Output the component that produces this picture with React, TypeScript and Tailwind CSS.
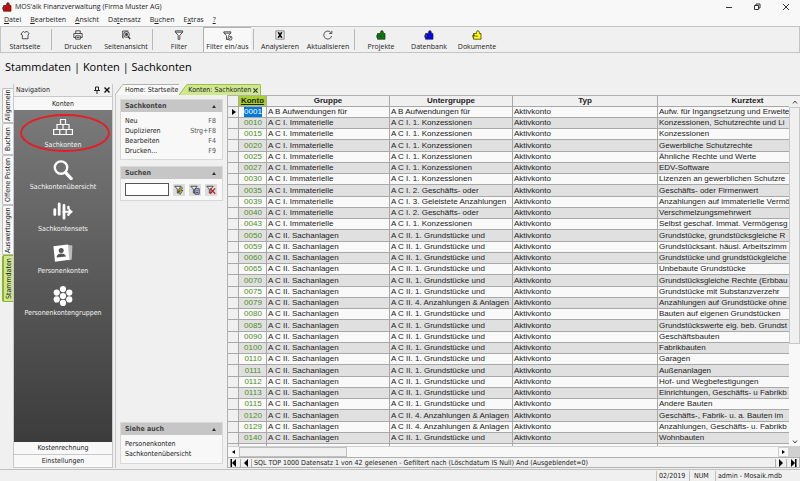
import React from 'react';
import clsx from 'clsx';

type Account = [konto: string, gruppe: string, untergruppe: string, kurztext: string];

const IM = 'A C I. Immaterielle';
const SA = 'A C II. Sachanlagen';
const K1 = 'A C I. 1. Konzessionen';
const K2 = 'A C I. 2. Geschäfts- oder';
const G1 = 'A C II. 1. Grundstücke und';
const G4 = 'A C II. 4. Anzahlungen & Anlagen';

const accounts: Account[] = [
  ['0001', 'A B Aufwendungen für', 'A B Aufwendungen für', 'Aufw. für Ingangsetzung und Erweite'],
  ['0010', IM, K1, 'Konzessionen, Schutzrechte und Li'],
  ['0015', IM, K1, 'Konzessionen'],
  ['0020', IM, K1, 'Gewerbliche Schutzrechte'],
  ['0025', IM, K1, 'Ähnliche Rechte und Werte'],
  ['0027', IM, K1, 'EDV-Software'],
  ['0030', IM, K1, 'Lizenzen an gewerblichen Schutzre'],
  ['0035', IM, K2, 'Geschäfts- oder Firmenwert'],
  ['0039', IM, 'A C I. 3. Geleistete Anzahlungen', 'Anzahlungen auf immaterielle Vermö'],
  ['0040', IM, K2, 'Verschmelzungsmehrwert'],
  ['0043', IM, K1, 'Selbst geschaf. Immat. Vermögensg'],
  ['0050', SA, G1, 'Grundstücke, grundstücksgleiche R'],
  ['0059', SA, G1, 'Grundstücksant. häusl. Arbeitszimm'],
  ['0060', SA, G1, 'Grundstücke und grundstückgleiche'],
  ['0065', SA, G1, 'Unbebaute Grundstücke'],
  ['0070', SA, G1, 'Grundstücksgleiche Rechte (Erbbau'],
  ['0075', SA, G1, 'Grundstücke mit Substanzverzehr'],
  ['0079', SA, G4, 'Anzahlungen auf Grundstücke ohne'],
  ['0080', SA, G1, 'Bauten auf eigenen Grundstücken'],
  ['0085', SA, G1, 'Grundstückswerte eig. beb. Grundst'],
  ['0090', SA, G1, 'Geschäftsbauten'],
  ['0100', SA, G1, 'Fabrikbauten'],
  ['0110', SA, G1, 'Garagen'],
  ['0111', SA, G1, 'Außenanlagen'],
  ['0112', SA, G1, 'Hof- und Wegbefestigungen'],
  ['0113', SA, G1, 'Einrichtungen, Geschäfts- u Fabrikb'],
  ['0115', SA, G1, 'Andere Bauten'],
  ['0120', SA, G4, 'Geschäfts-, Fabrik- u. a. Bauten im'],
  ['0129', SA, G4, 'Anzahlungen, Geschäfts- u. Fabrikb'],
  ['0140', SA, G1, 'Wohnbauten'],
  ['0145', SA, G1, 'Garagen'],
];

const menu: [string, string, string][] = [
  ['', 'D', 'atei'],
  ['', 'B', 'earbeiten'],
  ['', 'A', 'nsicht'],
  ['Da', 't', 'ensatz'],
  ['B', 'u', 'chen'],
  ['E', 'x', 'tras'],
  ['', '?', ''],
];

/* ---------- icons ---------- */

const Puzzle = ({ color, className }: { color: string; className?: string }) => (
  <svg viewBox="0 0 10 10" className={clsx('size-2.5', className)}>
    <path
      d="M4.5 3.5V2.2L5.2 .8h1.4l.8 1.4v1.3H9v5.7H1.5V7.4H.8V5.2h.7v1h1.2V4.9H1.5V3.5z"
      fill={color}
      stroke="#222"
      strokeWidth=".7"
    />
    <path d="M3.4 6.2h2.4" stroke="#222" strokeWidth=".7" />
  </svg>
);

const Line = ({ children }: { children: React.ReactNode }) => (
  <svg viewBox="0 0 12 12" className="size-2.5" fill="none" stroke="#333" strokeWidth="1">
    {children}
  </svg>
);

const StartIcon = () => (
  <Line>
    <path d="M1 5L4 1.6l1.4 1.2L8.6 1.6 11 4.6 9.6 5.8v4.7H2.8V6z" strokeLinejoin="round" />
  </Line>
);

const PrintIcon = () => (
  <Line>
    <path d="M3.3 4V1h5.4v3M3 9H1V4.2h10V9H9M3.2 7h5.6v4H3.2zM4.4 9h3.2" />
  </Line>
);

const PreviewIcon = () => (
  <Line>
    <path d="M2 8V1.2h7M3.5 9.5H2V7" />
    <circle cx="6.6" cy="5.4" r="3.4" />
    <circle cx="6.6" cy="5.4" r="1.4" fill="#333" />
    <path d="M8.6 7.8l2.4 3" strokeWidth="1.6" />
  </Line>
);

const FilterIcon = () => (
  <Line>
    <path d="M1.6 1h8.8v1.6L7 6.4v4.8H5V6.4L1.6 2.6zM1.8 2.6h8.4" />
  </Line>
);

const FilterToggleIcon = () => (
  <Line>
    <path d="M1 1h8.4v1.4L6.4 5.6M1 1v1.4l3.2 3.2v4.6h2M1.2 2.6h8" />
    <circle cx="8.4" cy="8.6" r="2.4" />
    <path d="M7 10l3-3" />
  </Line>
);

const ExcelIcon = () => (
  <Line>
    <path d="M1 1h10v10H1z" stroke="#777" />
    <path d="M3.8 2.8l4.4 6.4M8.2 2.8L3.8 9.2" stroke="#111" strokeWidth="2" />
  </Line>
);

const RefreshIcon = () => (
  <Line>
    <path d="M10.4 7.2A4.8 4.8 0 1 1 9.6 3.2M10.6 1v3.2H7.4" />
  </Line>
);

const BricksIcon = () => (
  <svg viewBox="0 0 20 18" className="h-[18px] w-5" fill="none" stroke="#fff" strokeWidth="1.2">
    <path d="M7.5 1.5h5v5h-5zM4 6.5h6v5H4zM10 6.5h6v5h-6zM.6 11.5h6.2v5H.6zM6.8 11.5h6.4v5H6.8zM13.2 11.5h6.2v5h-6.2z" />
  </svg>
);

const SearchIcon = () => (
  <svg viewBox="0 0 20 20" className="size-5" fill="none" stroke="#fff">
    <circle cx="8" cy="7.6" r="6.2" strokeWidth="2.4" />
    <path d="M12.6 12.6l5.6 6" strokeWidth="3.2" strokeLinecap="round" />
  </svg>
);

const SetsIcon = () => (
  <svg viewBox="0 0 20 18" className="h-[18px] w-5" fill="none" stroke="#fff" strokeWidth="2.8" strokeLinecap="round">
    <path d="M1.8 7.6v5M6.2 2v10.4M11 3.4v12.8" />
    <path d="M15.4 5v1.4M15.4 12.4v.4" strokeWidth="2.4" />
    <path d="M10.4 9.8h6" strokeWidth="2" />
    <path d="M15.6 6l4.4 3.8-4.4 3.8z" fill="#fff" stroke="none" />
  </svg>
);

const PersonIcon = () => (
  <svg viewBox="0 0 20 18" className="h-[18px] w-5">
    <path d="M14.6 .8l4.8 .6-.6 14-3 1z" fill="#bbb" />
    <path d="M.4 2.2L15 .4l1.4 15.4L2 17.8z" fill="#fff" />
    <circle cx="8.2" cy="6.6" r="2.5" fill="#555" />
    <path d="M3.6 13.4c.4-3 2.2-4 4.6-4s4 .8 4.8 3.2z" fill="#555" />
  </svg>
);

const GroupIcon = () => (
  <svg viewBox="0 0 20 20" className="size-5" fill="#fff">
    <circle cx="10" cy="10" r="3.1" />
    <circle cx="10" cy="3.1" r="3.1" />
    <circle cx="10" cy="16.9" r="3.1" />
    <circle cx="3.7" cy="6.6" r="3.1" />
    <circle cx="16.3" cy="6.6" r="3.1" />
    <circle cx="3.7" cy="13.4" r="3.1" />
    <circle cx="16.3" cy="13.4" r="3.1" />
  </svg>
);

const SmallFilter = ({ children }: { children: React.ReactNode }) => (
  <svg viewBox="0 0 12 12" className="size-2.5" fill="none">
    <path d="M1 1.5h7.6L5.8 5v4.6H4V5z" stroke="#333" fill="#eee" />
    {children}
  </svg>
);

const Arrow = ({ dir, bar }: { dir: 'left' | 'right'; bar?: boolean }) => (
  <svg viewBox="0 0 8 8" className={clsx('size-2', dir === 'left' && 'rotate-180')}>
    <path d="M2 0l4 4-4 4z" fill="#000" />
    {bar && <path d="M6 0h1.5v8H6z" fill="#000" />}
  </svg>
);

/* ---------- parts ---------- */

const ToolButton = ({ icon, label, active }: { icon: React.ReactNode; label: string; active?: boolean }) => (
  <button
    className={clsx(
      'flex w-12 shrink-0 flex-col items-center justify-between whitespace-nowrap pt-[3px] text-[7px] leading-[10px]',
      active && 'border-t border-l border-[#b0b0b0] bg-[#f8f8f8]'
    )}
  >
    {icon}
    <span>{label}</span>
  </button>
);

const Separator = () => <div className="mx-0.5 my-0.5 w-px shrink-0 bg-[#b8b8b8]" />;

const Panel = ({ title, children }: { title: string; children: React.ReactNode }) => (
  <section className="border border-[#d8d8d8] bg-[#f8f8f8]">
    <h2 className="flex h-3 items-center justify-between bg-[#c6c6c6] px-1 font-bold text-[#444]">
      {title}
      <svg viewBox="0 0 4 3" className="mr-0.5 h-[3px] w-1">
        <path d="M0 3l2-3 2 3z" fill="#333" />
      </svg>
    </h2>
    {children}
  </section>
);

const commands = [
  ['Neu', 'F8'],
  ['Duplizieren', 'Strg+F8'],
  ['Bearbeiten', 'F4'],
  ['Drucken...', 'F9'],
];

const navItems = [
  { label: 'Sachkonten', icon: <BricksIcon />, marked: true },
  { label: 'Sachkontenübersicht', icon: <SearchIcon /> },
  { label: 'Sachkontensets', icon: <SetsIcon /> },
  { label: 'Personenkonten', icon: <PersonIcon /> },
  { label: 'Personenkontengruppen', icon: <GroupIcon /> },
];

const sideTabs = [
  { label: 'Allgemein', size: 'h-[35px]' },
  { label: 'Buchen', size: 'h-8' },
  { label: 'Offene Posten', size: 'h-[50px]' },
  { label: 'Auswertungen', size: 'h-[50px]' },
  { label: 'Stammdaten', size: 'h-[47px]', active: true },
];

const TitleBar = () => (
  <header className="flex h-[14px] shrink-0 items-center bg-[#f8f8f8] pl-0.5 text-[7px]">
    <Puzzle color="#e00000" className="mr-[3px]" />
    <h1>MOS'aik Finanzverwaltung (Firma Muster AG)</h1>
    <div className="ml-auto flex">
      <button aria-label="Minimieren" className="flex w-[29px] justify-center">
        <svg viewBox="0 0 8 8" className="size-2" stroke="#333">
          <path d="M1 4.5h6" />
        </svg>
      </button>
      <button aria-label="Wiederherstellen" className="flex w-[28px] justify-center">
        <svg viewBox="0 0 8 8" className="size-2" fill="none" stroke="#333">
          <path d="M1.5 2.5h4v4h-4zM3 2V1h4v4H6" />
        </svg>
      </button>
      <button aria-label="Schließen" className="flex w-[29px] justify-center">
        <svg viewBox="0 0 8 8" className="size-2" stroke="#333">
          <path d="M1 1l6 6M7 1L1 7" />
        </svg>
      </button>
    </div>
  </header>
);

const Toolbar = () => (
  <div className="flex h-[27px] shrink-0 border border-[#c4c4c4] bg-[#f0f0f0]">
    <ToolButton icon={<StartIcon />} label="Startseite" />
    <Separator />
    <ToolButton icon={<PrintIcon />} label="Drucken" />
    <ToolButton icon={<PreviewIcon />} label="Seitenansicht" />
    <Separator />
    <ToolButton icon={<FilterIcon />} label="Filter" />
    <ToolButton icon={<FilterToggleIcon />} label="Filter ein/aus" active />
    <Separator />
    <ToolButton icon={<ExcelIcon />} label="Analysieren" />
    <ToolButton icon={<RefreshIcon />} label="Aktualisieren" />
    <Separator />
    <ToolButton icon={<Puzzle color="#008000" />} label="Projekte" />
    <ToolButton icon={<Puzzle color="#0000ff" />} label="Datenbank" />
    <ToolButton icon={<Puzzle color="#ffff00" />} label="Dokumente" />
  </div>
);

const Navigation = () => (
  <nav className="flex w-[100px] shrink-0 flex-col border-x border-b border-[#c8c8c8] bg-[#f8f8f8] text-[7px] leading-[10px]">
    <div className="flex h-3 items-center bg-[#f0f0f0] px-0.5">
      Navigation
      <svg viewBox="0 0 6 8" className="ml-auto h-2 w-1.5" fill="none" stroke="#222">
        <path d="M1.5 1h3v3.5h-3zM0 4.5h6M3 4.5V8" />
      </svg>
      <svg viewBox="0 0 6 6" className="ml-1 size-1.5" stroke="#111" strokeWidth="1.4">
        <path d="M.5 .5l5 5M5.5 .5l-5 5" />
      </svg>
    </div>
    <button className="h-[14px] border-t border-[#c8c8c8]">Konten</button>
    <div className="flex min-h-0 flex-1 flex-col items-center gap-2.5 bg-linear-to-b from-[#7a7a7a] to-[#3c3c3c] pt-2 text-[#f4f4f4]">
      {navItems.map(item => (
        <a key={item.label} href="#" className="relative flex h-8 flex-col items-center justify-between">
          {item.icon}
          {item.label}
          {item.marked && (
            <span className="absolute -top-1 left-1/2 ml-0.5 h-[38px] w-[90px] -translate-x-1/2 rounded-[50%] border-2 border-[#e81c24]" />
          )}
        </a>
      ))}
    </div>
    <button className="h-3">Kostenrechnung</button>
    <button className="h-[13px] border-t border-[#c8c8c8]">Einstellungen</button>
  </nav>
);

const TaskPane = () => (
  <aside className="flex w-28 shrink-0 flex-col gap-1.5 border-l border-[#c8c8c8] px-1 pt-1 pb-1 text-[7px] leading-[10px]">
    <Panel title="Sachkonten">
      <ul className="px-1 pt-1 pb-[3px]">
        {commands.map(([name, key]) => (
          <li key={name}>
            <button className="flex w-full justify-between pr-0.5">
              <span>{name}</span>
              <span className="text-[#555]">{key}</span>
            </button>
          </li>
        ))}
      </ul>
    </Panel>
    <Panel title="Suchen">
      <div className="flex items-center gap-1 px-1 py-1">
        <input aria-label="Suchen" className="h-[13px] w-11 border border-[#555] bg-white px-0.5" />
        <button aria-label="Filtern" className="flex size-3 items-center justify-center bg-[#dcdcdc]">
          <SmallFilter>
            <path d="M10 3L6.8 7.4h2.4L6.6 11" stroke="#333" strokeWidth="2" />
            <path d="M10 3L6.8 7.4h2.4L6.6 11" stroke="#e8e800" />
          </SmallFilter>
        </button>
        <button aria-label="Filter bearbeiten" className="flex size-3 items-center justify-center bg-[#dcdcdc]">
          <SmallFilter>
            <path d="M6 4.5h5v6.5H6zM7.4 7h2.4M7.4 9h2.4" stroke="#224" fill="#cde" />
          </SmallFilter>
        </button>
        <button aria-label="Filter löschen" className="flex size-3 items-center justify-center bg-[#dcdcdc]">
          <SmallFilter>
            <path d="M5 4l6 6.5M11 4l-6 6.5" stroke="#c02020" strokeWidth="1.5" />
          </SmallFilter>
        </button>
      </div>
    </Panel>
    <div className="mt-auto">
      <Panel title="Siehe auch">
        <ul className="px-1 pt-1 pb-1">
          <li><a href="#">Personenkonten</a></li>
          <li><a href="#">Sachkontenübersicht</a></li>
        </ul>
      </Panel>
    </div>
  </aside>
);

const AccountGrid = () => (
  <div className="flex min-h-0 flex-1">
    <div className="min-w-0 flex-1 overflow-hidden">
      <table className="w-full table-fixed border-separate border-spacing-0 font-['Liberation_Sans',Arial,sans-serif] text-[8px] leading-[10px] whitespace-nowrap [&_td]:overflow-hidden [&_td]:border-r [&_td]:border-b [&_td]:border-[#a8a8a8] [&_td]:p-0 [&_td]:pl-px [&_td:last-child]:border-r-0 [&_th]:border-r [&_th]:border-b [&_th]:border-[#a8a8a8] [&_th]:p-0 [&_th:last-child]:border-r-0">
        <colgroup>
          <col className="w-[11px]" />
          <col className="w-7" />
          <col className="w-[123px]" />
          <col className="w-[123px]" />
          <col className="w-[145px]" />
          <col />
        </colgroup>
        <thead>
          <tr className="h-[11px] bg-[#f0f0f0]">
            <th />
            <th className="bg-[#a8d030] underline">Konto</th>
            <th>Gruppe</th>
            <th>Untergruppe</th>
            <th>Typ</th>
            <th>
              <span className="block pl-12">Kurztext</span>
            </th>
          </tr>
        </thead>
        <tbody>
          {accounts.map(([konto, gruppe, untergruppe, kurztext], i) => (
            <tr key={konto} className="h-[11px] odd:bg-[#f9f9f9] even:bg-[#e0e0e0] nth-[4n]:h-3">
              <td className="bg-[#f0f0f0]">
                {i === 0 && (
                  <svg viewBox="0 0 4 6" className="mx-auto h-1.5 w-1">
                    <path d="M0 0l4 3-4 3z" fill="#000" />
                  </svg>
                )}
              </td>
              <td className="text-center text-[#4f8f1f]">
                <span className={clsx(i === 0 && 'mx-auto block w-[18px] bg-[#0078d7] text-white')}>{konto}</span>
              </td>
              <td>{gruppe}</td>
              <td>{untergruppe}</td>
              <td>Aktivkonto</td>
              <td>{kurztext}</td>
            </tr>
          ))}
        </tbody>
      </table>
    </div>
    <div className="flex w-[11px] shrink-0 flex-col items-center bg-[#f8f8f8]">
      <button aria-label="Nach oben" className="flex h-[11px] w-full items-center justify-center bg-[#f0f0f0]">
        <svg viewBox="0 0 6 4" className="h-1 w-1.5" fill="none" stroke="#444">
          <path d="M1 3.5l2-2.5 2 2.5" />
        </svg>
      </button>
      <div className="min-h-0 w-full flex-5 border border-[#c8c8c8] bg-[#f0f0f0]" />
      <div className="min-h-0 w-full flex-2" />
      <button aria-label="Nach unten" className="flex h-2 w-full items-center justify-center">
        <svg viewBox="0 0 6 4" className="h-1 w-1.5" fill="none" stroke="#444">
          <path d="M1 .5L3 3 5 .5" />
        </svg>
      </button>
    </div>
  </div>
);

const App: React.FC = () => (
  <div className="flex h-screen flex-col overflow-hidden bg-[#f0f0f0] font-['Open_Sans','Segoe_UI',sans-serif] text-[#222]">
    <TitleBar />
    <div className="flex h-3 shrink-0 items-center gap-[9px] bg-[#f8f8f8] pl-1 text-[7px]">
      {menu.map(([before, key, after]) => (
        <button key={before + key + after}>
          {before}
          <u>{key}</u>
          {after}
        </button>
      ))}
    </div>
    <Toolbar />
    <h2 className="shrink-0 px-[5px] pt-1 pb-[7px] text-[11px] leading-5 text-black">Stammdaten | Konten | Sachkonten</h2>

    <main className="flex min-h-0 flex-1 font-['DejaVu_Sans_Condensed','DejaVu_Sans',sans-serif]">
      <div className="flex shrink-0 flex-col pt-1 pl-0.5 text-[7px] leading-[10px]">
        {sideTabs.map(tab => (
          <button
            key={tab.label}
            className={clsx(
              'flex w-[11px] rotate-180 items-center justify-center rounded-r-xs border border-l-0 whitespace-nowrap [writing-mode:vertical-rl]',
              tab.size,
              tab.active ? 'border-r-2 border-[#8ab820] bg-[#cfe890]' : 'border-[#c0c0c0] bg-[#f8f8f8]'
            )}
          >
            {tab.label}
          </button>
        ))}
      </div>
      <Navigation />

      <div className="ml-0.5 flex min-w-0 flex-1 flex-col">
        <div className="flex h-[11px] shrink-0 items-stretch text-[7px] leading-[10px] whitespace-nowrap">
          <button className="flex items-center">
            <svg viewBox="0 0 9 11" className="h-[11px] w-[9px]">
              <path d="M0 11L7 1.5Q8 .5 9 .5V11z" fill="#f8f8f8" />
              <path d="M0 11L7 1.5Q8 .5 9 .5" fill="none" stroke="#b0b0b0" />
            </svg>
            <span className="h-full border-t border-[#b0b0b0] bg-[#f8f8f8] px-px">Home: Startseite</span>
          </button>
          <button className="flex items-center">
            <svg viewBox="0 0 9 11" className="h-[11px] w-[9px]">
              <path d="M0 11L7 1.5Q8 .5 9 .5V11z" fill="#cfe890" />
              <path d="M0 11L7 1.5Q8 .5 9 .5" fill="none" stroke="#9cc040" />
            </svg>
            <span className="flex h-full items-center gap-0.5 rounded-tr-xs border-t border-r border-[#9cc040] bg-[#cfe890] pr-0.5">
              Konten: Sachkonten
              <svg viewBox="0 0 6 6" className="size-[5px]" stroke="#333" strokeWidth="1.4">
                <path d="M.5 .5l5 5M5.5 .5l-5 5" />
              </svg>
            </span>
          </button>
        </div>
        <div className="flex min-h-0 flex-1">
          <TaskPane />
          <div className="flex min-w-0 flex-1 flex-col border-t border-l border-[#b0b0b0]">
            <AccountGrid />
            <div className="flex h-[11px] shrink-0 border-t border-[#d0d0d0] bg-[#f8f8f8]">
              <button aria-label="Nach links" className="flex w-[11px] items-center justify-center">
                <svg viewBox="0 0 3 4" className="h-1 w-[3px]"><path d="M3 0L0 2l3 2z" /></svg>
              </button>
              <div className="w-[108px] border border-[#c0c0c0] bg-[#f0f0f0]" />
              <button aria-label="Nach rechts" className="ml-auto flex w-[11px] items-center justify-center border border-[#d0d0d0]">
                <svg viewBox="0 0 3 4" className="h-1 w-[3px]"><path d="M0 0l3 2-3 2z" /></svg>
              </button>
              <div className="w-[11px] bg-[#d0d0d0]" />
            </div>
            <div className="flex h-[11px] shrink-0 items-center border border-l-0 border-[#b0b0b0] text-[7px] leading-[10px]">
              <button aria-label="Erster Datensatz" className="flex w-3 justify-center"><Arrow dir="left" bar /></button>
              <button aria-label="Voriger Datensatz" className="flex w-3 justify-center border-x border-[#b0b0b0]"><Arrow dir="left" /></button>
              <span className="truncate pl-0.5">
                SQL TOP 1000 Datensatz 1 von 42 gelesenen - Gefiltert nach (Löschdatum IS Null) And (Ausgeblendet=0)
              </span>
              <button aria-label="Nächster Datensatz" className="ml-auto flex w-3 justify-center border-x border-[#b0b0b0]"><Arrow dir="right" /></button>
              <button aria-label="Letzter Datensatz" className="flex w-3 justify-center"><Arrow dir="right" bar /></button>
            </div>
          </div>
        </div>
      </div>
    </main>

    <footer className="mt-px flex h-3 shrink-0 items-center justify-end border-t border-[#c0c0c0] font-['DejaVu_Sans_Condensed','DejaVu_Sans',sans-serif] text-[7px] leading-[10px]">
      <span className="w-[33px] border-l border-[#c0c0c0] pl-0.5">02/2019</span>
      <span className="w-[26px] border-l border-[#c0c0c0] pl-1">NUM</span>
      <span className="w-[85px] border-l border-[#c0c0c0] pl-0.5">admin - Mosaik.mdb</span>
    </footer>
  </div>
);

export default App;
